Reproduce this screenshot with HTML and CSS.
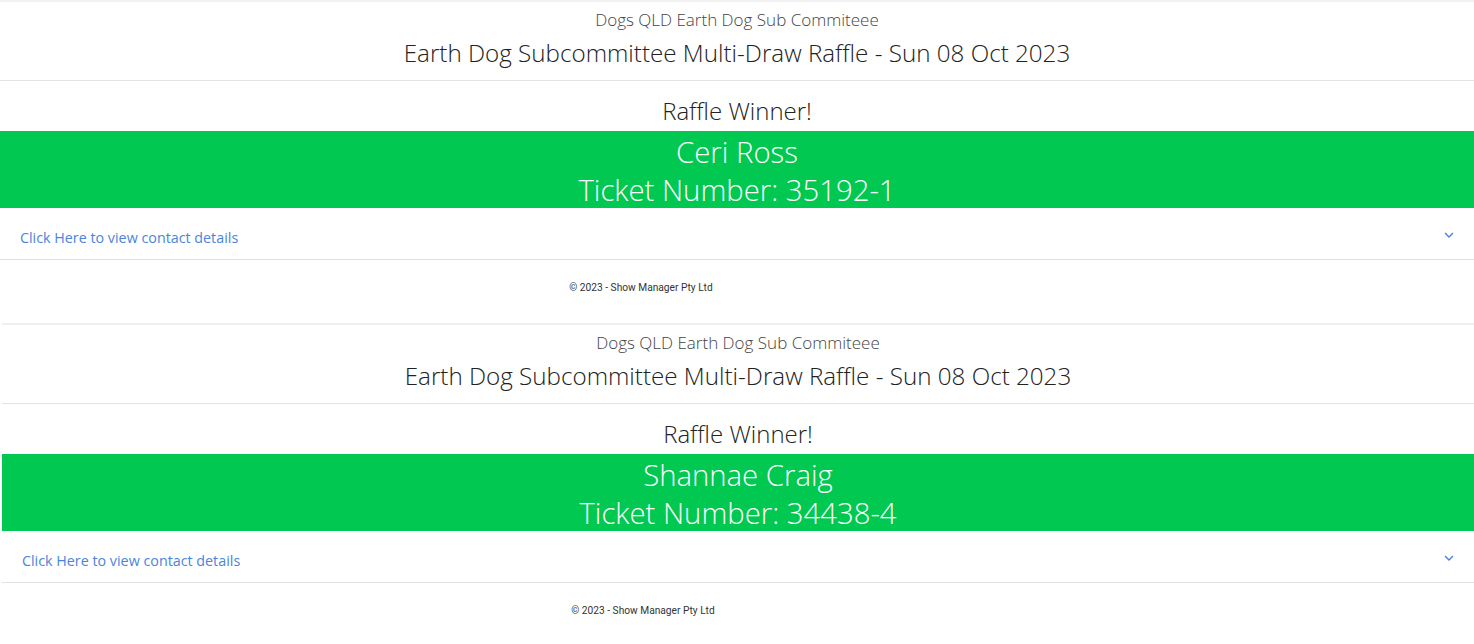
FILE: index.html
```html
<!DOCTYPE html>
<html lang="en">
<head>
<meta charset="utf-8">
<title>Raffle Winner</title>
<link rel="stylesheet" href="styles.css">
</head>
<body>
<div class="page">
  <section class="card">
    <header class="card-header">
      <p class="org">Dogs QLD Earth Dog Sub Commiteee</p>
      <h1 class="title">Earth Dog Subcommittee Multi-Draw Raffle - Sun 08 Oct 2023</h1>
    </header>
    <div class="card-body">
      <h2 class="winner-label">Raffle Winner!</h2>
      <div class="winner">
        <div>Ceri Ross</div>
        <div>Ticket Number: 35192-1</div>
      </div>
      <div class="accordion">
        <a class="contact-link" href="#">Click Here to view contact details</a>
        <svg class="chevron" width="10" height="6" viewBox="0 0 10 6"><path d="M1 1 L5 5 L9 1" fill="none" stroke="#4a80e0" stroke-width="1.4"/></svg>
      </div>
    </div>
    <footer class="footer"><span>© 2023 - Show Manager Pty Ltd</span></footer>
  </section>
  <section class="card card-second">
    <header class="card-header">
      <p class="org">Dogs QLD Earth Dog Sub Commiteee</p>
      <h1 class="title">Earth Dog Subcommittee Multi-Draw Raffle - Sun 08 Oct 2023</h1>
    </header>
    <div class="card-body">
      <h2 class="winner-label">Raffle Winner!</h2>
      <div class="winner">
        <div>Shannae Craig</div>
        <div>Ticket Number: 34438-4</div>
      </div>
      <div class="accordion">
        <a class="contact-link" href="#">Click Here to view contact details</a>
        <svg class="chevron" width="10" height="6" viewBox="0 0 10 6"><path d="M1 1 L5 5 L9 1" fill="none" stroke="#4a80e0" stroke-width="1.4"/></svg>
      </div>
    </div>
    <footer class="footer"><span>© 2023 - Show Manager Pty Ltd</span></footer>
  </section>
</div>
</body>
</html>
```
FILE: styles.css
```css
* { box-sizing: border-box; }
html, body { margin: 0; padding: 0; background: #fff; }
body {
  font-family: "Open Sans", "Noto Sans", sans-serif;
  font-weight: 300;
  color: #333;
  overflow: hidden;
}
.page { width: 1474px; }
.card {
  height: 323px;
  border-top: 2px solid #f2f2f2;
  background: #fff;
}
.card-second { margin-left: 2px; border-top-color: #efefef; }
.card-header {
  height: 79px;
  border-bottom: 1px solid #e3e3e3;
  text-align: center;
  padding-top: 7px;
}
.org {
  margin: 0;
  font-size: 17px;
  line-height: 22px;
  color: #444;
}
.title {
  margin: 0;
  padding-top: 6px;
  font-size: 24.2px;
  line-height: 32px;
  font-weight: 300;
  color: #222;
}
.winner-label {
  margin: 0;
  height: 50px;
  padding-top: 14px;
  text-align: center;
  font-size: 24px;
  line-height: 32px;
  font-weight: 300;
  color: #222;
}
.winner {
  background: #00c851;
  color: #fff;
  text-align: center;
  font-size: 29.3px;
  line-height: 38px;
  height: 77px;
  padding-top: 2px;
}
.accordion {
  height: 52px;
  border-bottom: 1px solid #e0e0e0;
  display: flex;
  align-items: center;
  justify-content: space-between;
  padding: 8px 20px 0 20px;
}
.contact-link {
  font-size: 14.3px;
  color: #4a85dc;
  text-decoration: none;
  font-weight: 400;
}
.chevron { margin-top: -6px; }
.footer {
  width: 1282px;
  text-align: center;
  padding-top: 22px;
  font-family: Roboto, "Liberation Sans", sans-serif;
  font-weight: 400;
  font-size: 10.2px;
  color: #333;
}
```
